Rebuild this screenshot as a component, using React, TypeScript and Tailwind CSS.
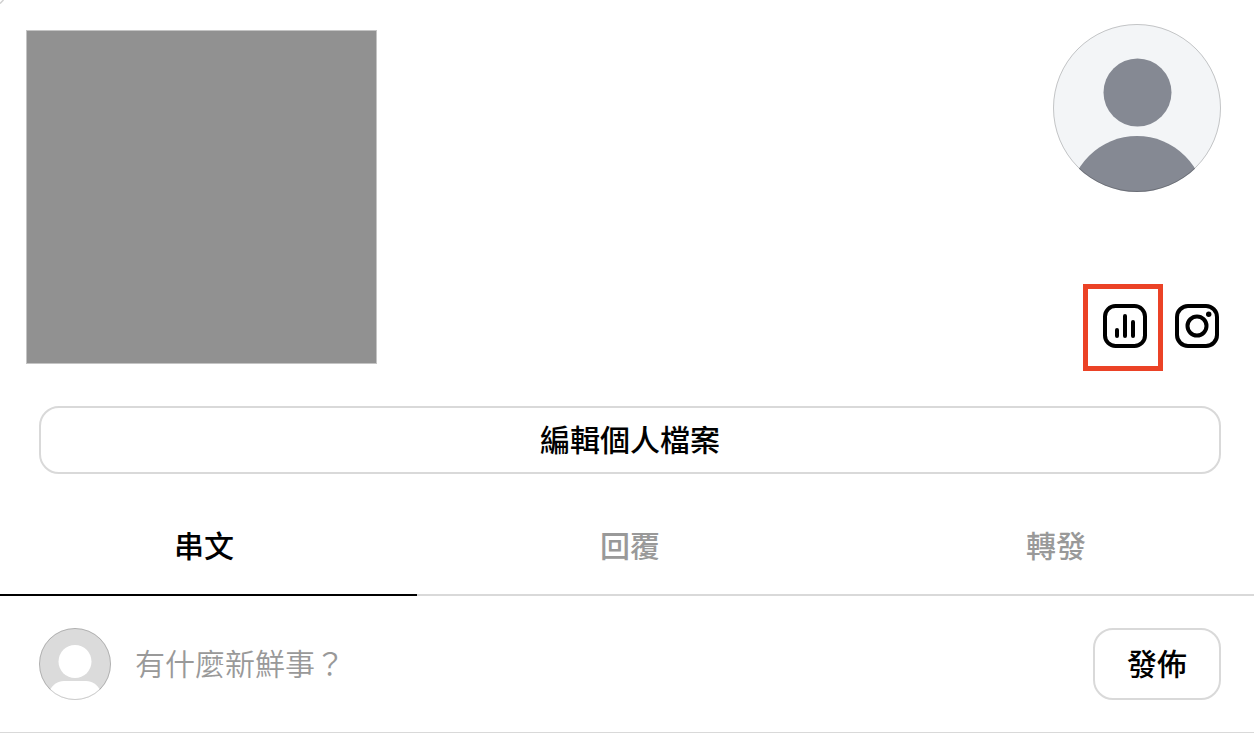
import { useState } from 'react';

const tabs = ['串文', '回覆', '轉發'];

function ProfileAvatar() {
  return (
    <svg viewBox="0 0 168 168" className="size-42" role="img" aria-label="個人大頭貼">
      <defs>
        <clipPath id="profile-clip">
          <circle cx="84" cy="84" r="84" />
        </clipPath>
      </defs>
      <g clipPath="url(#profile-clip)">
        <rect width="168" height="168" fill="#f3f5f7" />
        <circle cx="84.5" cy="68.5" r="34" fill="#858993" />
        <circle cx="84" cy="180" r="68" fill="#858993" />
      </g>
      <circle cx="84" cy="84" r="83.5" fill="none" stroke="#000" strokeOpacity="0.2" />
    </svg>
  );
}

function SmallAvatar() {
  return (
    <svg viewBox="0 0 72 72" className="size-18 shrink-0" role="img" aria-label="我的大頭貼">
      <defs>
        <clipPath id="small-clip">
          <circle cx="36" cy="36" r="36" />
        </clipPath>
      </defs>
      <g clipPath="url(#small-clip)">
        <rect width="72" height="72" fill="#dbdbdb" />
        <circle cx="36" cy="33.5" r="16.5" fill="#fff" />
        <path d="M11 62C14 56.500 18.500 53 25 53H47C53.500 53 58 56.500 61 62V74H11Z" fill="#fff" />
      </g>
      <circle cx="36" cy="36" r="35.5" fill="none" stroke="#000" strokeOpacity="0.2" />
    </svg>
  );
}

function InsightsIcon() {
  return (
    <svg viewBox="0 0 44 44" className="size-11" fill="none" stroke="#000" strokeWidth="4" strokeLinecap="round" aria-hidden="true">
      <rect x="2" y="2" width="40" height="40" rx="10.5" />
      <path d="M14 26V32M22 12V32M30 18V32" />
    </svg>
  );
}

function InstagramIcon() {
  return (
    <svg viewBox="0 0 44 44" className="size-11" fill="none" stroke="#000" strokeWidth="4" aria-hidden="true">
      <rect x="2" y="2" width="40" height="40" rx="11" />
      <circle cx="22" cy="22" r="9.5" />
      <circle cx="33.7" cy="10.3" r="2.7" fill="#000" stroke="none" />
    </svg>
  );
}

export default function App() {
  const [active, setActive] = useState(0);

  return (
    <main
      lang="zh-Hant"
      className="relative overflow-hidden bg-white font-['Noto_Sans_CJK_TC',sans-serif] text-3xl leading-10 text-black"
    >
      <svg viewBox="0 0 4 4" className="absolute top-0 left-0 size-1" aria-hidden="true">
        <path d="M0 3.500L3.500 0" stroke="#d0d0d0" strokeWidth="1.500" />
      </svg>

      <header className="flex items-start justify-between pt-6 pr-[33px] pl-[26px]">
        <div className="mt-1.5 h-[334px] w-[351px] border border-[#c4c4c4] bg-[#919191]" />
        <div className="flex flex-col items-end">
          <ProfileAvatar />
          <div className="mt-[92px] flex items-center gap-3">
            <div className="flex h-[87px] w-20 items-start justify-end border-5 border-[#eb4226] pt-[15px] pr-[11px]">
              <button type="button" aria-label="洞察報告">
                <InsightsIcon />
              </button>
            </div>
            <a href="#instagram" aria-label="Instagram" className="mr-0.5 mb-[3px]">
              <InstagramIcon />
            </a>
          </div>
        </div>
      </header>

      <div className="mt-[35px] pr-[33px] pl-[39px]">
        <button type="button" className="h-17 w-full rounded-[20px] border-2 border-[#d9d9d9] pb-1 font-medium">
          編輯個人檔案
        </button>
      </div>

      <nav role="tablist" className="mt-6 -mr-[15px] -ml-[9px] grid grid-cols-3">
        {tabs.map((tab, i) => (
          <button
            key={tab}
            type="button"
            role="tab"
            aria-selected={i === active}
            onClick={() => setActive(i)}
            className={
              i === active
                ? 'h-[98px] border-b-2 border-black pb-1 font-medium text-black'
                : 'h-[98px] border-b-2 border-[#d9d9d9] pb-1 font-medium text-[#999999]'
            }
          >
            {tab}
          </button>
        ))}
      </nav>

      <form
        onSubmit={(e) => e.preventDefault()}
        className="flex items-center border-b border-[#d9d9d9] py-8 pr-[33px] pl-[39px]"
      >
        <SmallAvatar />
        <input
          type="text"
          aria-label="有什麼新鮮事？"
          placeholder="有什麼新鮮事？"
          className="ml-6 min-w-0 flex-1 pb-1 font-[350] outline-none placeholder:text-[#999999]"
        />
        <button type="submit" className="h-18 w-32 rounded-[20px] border-2 border-[#d9d9d9] pb-1 font-medium">
          發佈
        </button>
      </form>
    </main>
  );
}
